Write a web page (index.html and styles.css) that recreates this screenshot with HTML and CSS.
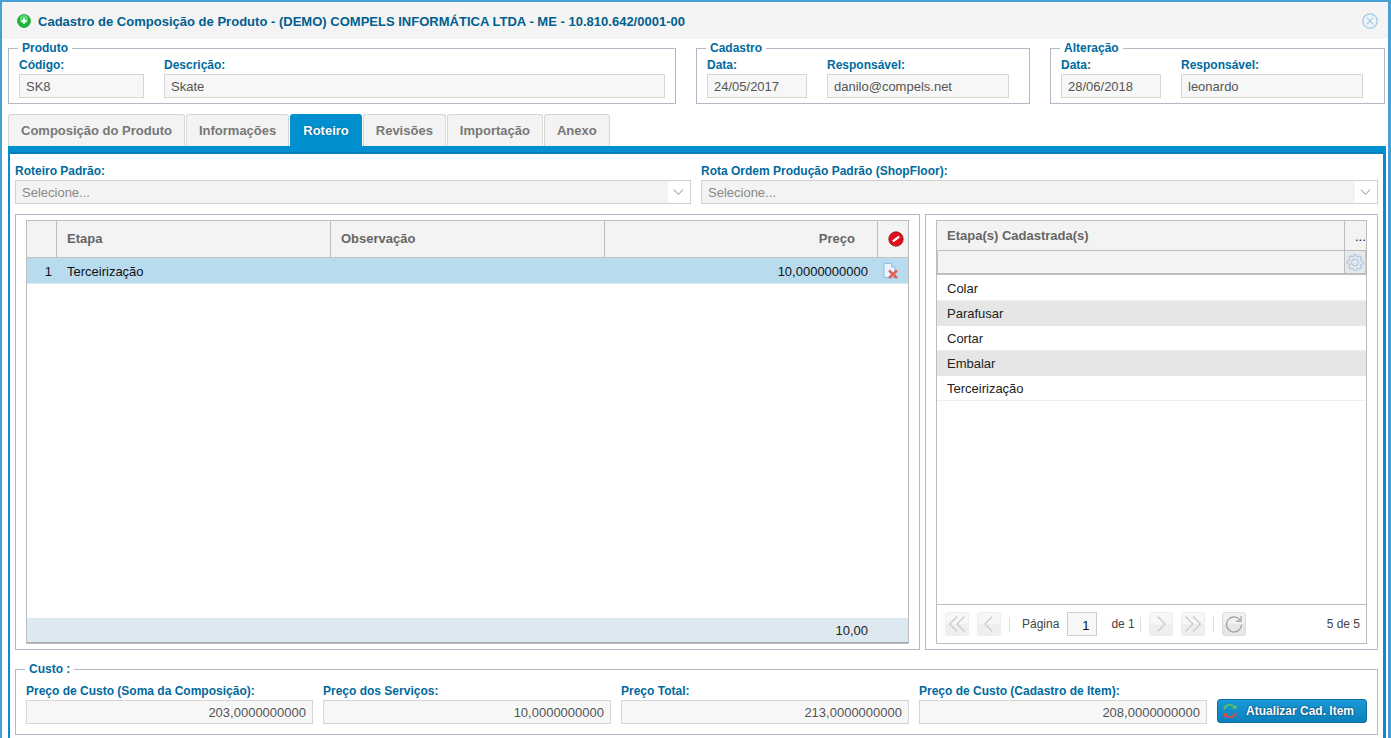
FILE: index.html
```html
<!DOCTYPE html>
<html lang="pt-BR">
<head>
<meta charset="utf-8">
<title>Cadastro de Composição de Produto</title>
<link rel="stylesheet" href="styles.css">
</head>
<body>
<div class="window">
  <header class="titlebar">
    <svg class="title-icon" viewBox="0 0 16 16"><circle cx="8" cy="8" r="7.400" fill="#1bb53a" stroke="#15963a" stroke-width=".8"/><circle cx="8" cy="6" r="4.800" fill="#8cf09c" opacity=".55"/><path d="M8 4.800v6.400M4.800 8h6.400" stroke="#fff" stroke-width="2"/></svg>
    <h1 class="title">Cadastro de Composição de Produto - (DEMO) COMPELS INFORMÁTICA LTDA - ME - 10.810.642/0001-00</h1>
    <svg class="close-icon" viewBox="0 0 16 16"><circle cx="8" cy="8" r="7.200" fill="#eef4f8" stroke="#9fcbe6" stroke-width="1.300"/><path d="M4.800 4.600l6.400 6.800M11.200 4.600l-6.400 6.800" stroke="#9fcbe6" stroke-width="1.100"/></svg>
  </header>

  <main class="content">
    <div class="top-row">
      <fieldset class="group group-produto">
        <legend>Produto</legend>
        <div class="fields">
          <div class="field w-125"><label>Código:</label><div class="input">SK8</div></div>
          <div class="field grow"><label>Descrição:</label><div class="input">Skate</div></div>
        </div>
      </fieldset>
      <fieldset class="group group-cad">
        <legend>Cadastro</legend>
        <div class="fields">
          <div class="field w-100"><label>Data:</label><div class="input">24/05/2017</div></div>
          <div class="field w-182"><label>Responsável:</label><div class="input">danilo@compels.net</div></div>
        </div>
      </fieldset>
      <fieldset class="group group-alt">
        <legend>Alteração</legend>
        <div class="fields">
          <div class="field w-100"><label>Data:</label><div class="input">28/06/2018</div></div>
          <div class="field w-182"><label>Responsável:</label><div class="input">leonardo</div></div>
        </div>
      </fieldset>
    </div>

    <nav class="tabs">
      <div class="tab">Composição do Produto</div>
      <div class="tab">Informações</div>
      <div class="tab active">Roteiro</div>
      <div class="tab">Revisões</div>
      <div class="tab">Importação</div>
      <div class="tab">Anexo</div>
    </nav>

    <section class="panel">
      <div class="selects">
        <div class="field"><label>Roteiro Padrão:</label>
          <div class="select"><span>Selecione...</span><i class="select-arrow"><svg viewBox="0 0 12 8"><path d="M1 1.500l5 5 5-5" fill="none" stroke="#a8a8a8" stroke-width="1.100"/></svg></i></div>
        </div>
        <div class="field"><label>Rota Ordem Produção Padrão (ShopFloor):</label>
          <div class="select"><span>Selecione...</span><i class="select-arrow"><svg viewBox="0 0 12 8"><path d="M1 1.500l5 5 5-5" fill="none" stroke="#a8a8a8" stroke-width="1.100"/></svg></i></div>
        </div>
      </div>

      <div class="panes">
        <div class="pane pane-left">
          <div class="grid">
            <div class="grid-head">
              <div class="th c-num"></div>
              <div class="th c-etapa">Etapa</div>
              <div class="th c-obs">Observação</div>
              <div class="th c-preco">Preço</div>
              <div class="th c-act"><svg class="ico16" viewBox="0 0 16 16"><circle cx="8" cy="8" r="7.200" fill="#e01020" stroke="#8a0a14" stroke-width=".8"/><path d="M4.800 10.400l6.400-4.800" stroke="#fff" stroke-width="2.400"/></svg></div>
            </div>
            <div class="grid-row">
              <div class="td c-num num">1</div>
              <div class="td c-etapa">Terceirização</div>
              <div class="td c-obs"></div>
              <div class="td c-preco">10,0000000000</div>
              <div class="td c-act"><svg class="ico16" viewBox="0 0 16 16"><path d="M1 .5h7.500l3.500 3.500v10.500h-11z" fill="#eaf4fc" stroke="#8dbce6"/><path d="M8.500 .5v3.500h3.500" fill="#cfe3f6" stroke="#8dbce6"/><path d="M6 7.500l8 7.500M14 7.500L6 15" stroke="#e0605e" stroke-width="2.400"/></svg></div>
            </div>
            <div class="grid-body"></div>
            <div class="grid-foot"><span>10,00</span></div>
          </div>
        </div>

        <div class="pane pane-right">
          <div class="grid grid-list">
            <div class="list-head">
              <div class="th list-title">Etapa(s) Cadastrada(s)</div>
              <div class="th list-more">...</div>
            </div>
            <div class="list-filter">
              <div class="filter-input"></div>
              <div class="filter-btn"><svg class="ico18" viewBox="0 0 24 24"><path d="M10.300 2h3.400l.5 2.800 1.900.8 2.400-1.600 2.400 2.400-1.600 2.400.8 1.900 2.800.5v3.400l-2.800.5-.8 1.900 1.600 2.400-2.400 2.400-2.400-1.600-1.900.8-.5 2.800h-3.400l-.5-2.800-1.900-.8L6 21.400 3.600 19l1.600-2.400-.8-1.900-2.800-.5v-3.400l2.800-.5.8-1.900L3.600 6 6 3.600l2.400 1.600 1.900-.8z" fill="none" stroke="#a3c6ea" stroke-width="1.400"/><circle cx="12" cy="12.600" r="4.400" fill="none" stroke="#a3c6ea" stroke-width="1.400"/></svg></div>
            </div>
            <ul class="list">
              <li>Colar</li>
              <li class="alt">Parafusar</li>
              <li>Cortar</li>
              <li class="alt">Embalar</li>
              <li>Terceirização</li>
            </ul>
            <div class="pager">
              <button class="pg-btn"><svg viewBox="0 0 24 24"><path d="M12 3L3 12l9 9M21 3l-9 9 9 9" fill="none" stroke="#c6c6c6" stroke-width="1.300"/></svg></button>
              <button class="pg-btn"><svg viewBox="0 0 24 24"><path d="M16 3l-9 9 9 9" fill="none" stroke="#c6c6c6" stroke-width="1.300"/></svg></button>
              <span class="pg-sep"></span>
              <span class="pg-text pg-label">Página</span>
              <div class="pg-input">1</div>
              <span class="pg-text pg-of">de 1</span>
              <span class="pg-sep pg-sep-tight"></span>
              <button class="pg-btn"><svg viewBox="0 0 24 24"><path d="M8 3l9 9-9 9" fill="none" stroke="#c6c6c6" stroke-width="1.300"/></svg></button>
              <button class="pg-btn"><svg viewBox="0 0 24 24"><path d="M3 3l9 9-9 9M12 3l9 9-9 9" fill="none" stroke="#c6c6c6" stroke-width="1.300"/></svg></button>
              <span class="pg-sep"></span>
              <button class="pg-btn pg-refresh"><svg viewBox="0 0 24 24"><path d="M19.500 7.500A9 9 0 1 0 21 13" fill="none" stroke="#9a9a9a" stroke-width="1.300"/><path d="M20.500 2.500v6h-6" fill="none" stroke="#9a9a9a" stroke-width="1.300"/></svg></button>
              <span class="pg-text pg-count">5 de 5</span>
            </div>
          </div>
        </div>
      </div>

      <fieldset class="group group-custo">
        <legend>Custo :</legend>
        <div class="cost-row">
          <div class="field"><label>Preço de Custo (Soma da Composição):</label><div class="input right">203,0000000000</div></div>
          <div class="field"><label>Preço dos Serviços:</label><div class="input right">10,0000000000</div></div>
          <div class="field"><label>Preço Total:</label><div class="input right">213,0000000000</div></div>
          <div class="field"><label>Preço de Custo (Cadastro de Item):</label><div class="input right">208,0000000000</div></div>
          <button class="btn-update"><svg class="ico16" viewBox="0 0 16 16"><path d="M2 6.500A6 6 0 0 1 12.500 4" fill="none" stroke="#6cc24a" stroke-width="1.700"/><path d="M10 5.500l4.500.3-.5-4z" fill="#6cc24a"/><path d="M14 9.500A6 6 0 0 1 3.500 12" fill="none" stroke="#e8483c" stroke-width="1.700"/><path d="M6 10.500l-4.500-.3.5 4z" fill="#e8483c"/></svg><span>Atualizar Cad. Item</span></button>
        </div>
      </fieldset>
    </section>
  </main>
</div>
</body>
</html>
```

FILE: styles.css
```css
* { box-sizing: border-box; }
html, body { margin: 0; height: 100%; overflow: hidden; background: #fff; }
body { font-family: "Liberation Sans", Arial, sans-serif; font-size: 13px; color: #111; }

.window {
  width: 1391px;
  height: 738px;
  overflow: hidden;
  border-top: 2px solid #45a1d5;
  border-left: 2px solid #45a1d5;
  border-right: 3px solid #45a1d5;
  background: #fff;
}
.titlebar {
  height: 37px;
  background: #f4f4f4;
  display: flex;
  align-items: center;
  padding: 1px 10px 0 15px;
}
.title-icon { width: 14px; height: 14px; flex: none; margin-right: 7px; }
.title { flex: 1; margin: 0; font-size: 13px; line-height: 37px; font-weight: bold; color: #00608f; letter-spacing: .011px; }
.close-icon { width: 16px; height: 16px; flex: none; }

.content { padding: 2px 1px 0 6px; }

.top-row { display: flex; gap: 20px; }
.group {
  margin: 0;
  padding: 0 10px;
  border: 1px solid #b2b9c7;
  min-width: 0;
}
.group legend {
  padding: 0 4px;
  margin-left: -1px;
  font-size: 12px;
  line-height: 14px;
  font-weight: bold;
  color: #006a9e;
}
.group-produto { width: 668px; height: 63px; }
.group-cad { width: 334px; height: 63px; }
.group-alt { width: 335px; height: 63px; }
.fields { display: flex; gap: 20px; margin-top: 1px; }
.field { display: flex; flex-direction: column; min-width: 0; }
.field label {
  font-size: 12px;
  line-height: 18px;
  height: 18px;
  font-weight: bold;
  color: #006a9e;
  white-space: nowrap;
}
.w-125 { width: 125px; }
.w-100 { width: 100px; }
.w-182 { width: 182px; }
.grow { flex: 0 0 501px; }
.input {
  height: 24px;
  border: 1px solid #d5d5d5;
  background: #f7f7f7;
  color: #555;
  font-size: 13px;
  line-height: 23px;
  padding: 0 6px;
}
.input.right { text-align: right; }

.tabs { display: flex; gap: 1px; margin-top: 10px; height: 32px; }
.tab {
  height: 32px;
  padding: 0 12px;
  border: 1px solid #d7d7d7;
  border-bottom: 0;
  border-radius: 3px 3px 0 0;
  background: #f3f3f3;
  color: #777;
  font-size: 13px;
  font-weight: bold;
  line-height: 31px;
}
.tab.active {
  background: #0090d0;
  border-color: #0090d0;
  color: #fff;
  text-shadow: 0 0 2px #00567d;
}

.panel {
  width: 1378px;
  height: 592px;
  border-top: 6px solid #0090d0;
  border-left: 2px solid #0090d0;
  border-right: 3px solid #0090d0;
  padding: 0 5px;
  box-shadow: inset 0 2px 0 #0580bd;
  background: #fff;
}
.selects { display: grid; grid-template-columns: 676px 677px; gap: 10px; padding-top: 12px; }
.selects .field label { height: 16px; line-height: 14px; }
.select {
  height: 24px;
  display: flex;
  border: 1px solid #d0d0d0;
  background: #f3f3f3;
  color: #888;
  line-height: 23px;
}
.select span { flex: 1; padding: 0 6px; }
.select-arrow { width: 22px; background: #fff; display: flex; align-items: center; justify-content: center; padding-right: 2px; }
.select-arrow svg { width: 11px; height: 8px; }

.panes { display: flex; gap: 5px; margin-top: 10px; height: 436px; }
.pane { border: 1px solid #b2b9c7; padding: 5px 10px; }
.pane-left { width: 905px; }
.pane-right { width: 453px; }

.grid {
  height: 424px;
  border: 1px solid #bdbdbd;
  display: flex;
  flex-direction: column;
  background: #fff;
}
.grid-head { display: flex; height: 37px; background: #f3f3f3; border-bottom: 1px solid #c4c4c4; flex: none; }
.th {
  border-right: 1px solid #bdbdbd;
  font-weight: bold;
  color: #666;
  font-size: 13px;
  line-height: 36px;
  padding: 0 10px;
}
.c-num { width: 30px; padding: 0; flex: none; }
.c-etapa { width: 274px; flex: none; padding: 0 10px; }
.c-obs { width: 274px; flex: none; padding: 0 10px; }
.c-preco { width: 273px; flex: none; text-align: right; padding: 0 22px 0 10px; }
.th.c-act { width: 31px; border-right: 0; padding: 0 0 0 4px; flex: none; display: flex; align-items: center; justify-content: center; }
.ico16 { width: 16px; height: 16px; display: block; flex: none; }
.grid-row { display: flex; height: 26px; background: #b8dbee; flex: none; border-bottom: 1px solid #d6e8f2; }
.td { line-height: 27px; color: #111; font-size: 13px; }
.td.num { text-align: right; padding-right: 5px; }
.td.c-preco { padding-right: 10px; }
.td.c-act { width: 31px; flex: none; display: flex; align-items: center; padding-left: 5px; }
.grid-body { flex: 1; }
.grid-foot {
  height: 25px;
  flex: none;
  background: #dce9f1;
  border-bottom: 1px solid #a8a8a8;
  text-align: right;
  padding-right: 40px;
  line-height: 26px;
  color: #222;
}

.list-head { display: flex; height: 30px; background: #f3f3f3; border-bottom: 1px solid #bdbdbd; flex: none; }
.list-title { flex: 1; line-height: 29px; }
.list-more { width: 21px; flex: none; border-right: 0; padding: 0 0 0 10px; color: #111; font-weight: normal; overflow: hidden; line-height: 32px; }
.list-filter { display: flex; height: 24px; flex: none; border-bottom: 2px solid #bdbdbd; }
.filter-input { flex: 1; background: #f3f3f3; border-left: 1px solid #a8cbe6; border-right: 1px solid #bdbdbd; }
.filter-btn { width: 21px; flex: none; background: #e8e8e8; border-right: 1px solid #a8cbe6; display: flex; align-items: center; justify-content: center; }
.ico18 { width: 18px; height: 18px; display: block; }
.list { flex: 1; list-style: none; margin: 0; padding: 1px 0 0; }
.list li { height: 25px; line-height: 25px; padding: 0 10px; color: #222; border-bottom: 1px solid #eee; }
.list li.alt { background: #e6e6e6; border-bottom-color: #e6e6e6; }

.pager {
  height: 39px;
  flex: none;
  border-top: 1px solid #bdbdbd;
  display: flex;
  align-items: center;
  padding: 0 6px 0 8px;
  font-size: 12px;
  color: #444;
}
.pg-btn {
  width: 24px;
  height: 24px;
  padding: 1px;
  margin: 0 8px 0 0;
  border: 1px solid #eee;
  border-radius: 3px;
  background: linear-gradient(#f7f7f7 50%, #efefef 50%);
  flex: none;
}
.pg-btn svg { display: block; width: 100%; height: 100%; }
.pg-refresh { background: linear-gradient(#f0f0f0 50%, #e6e6e6 50%); border-color: #ddd; margin: 0; }
.pg-sep { width: 1px; height: 15px; background: #ddd; margin: 0 8px 0 0; flex: none; }
.pg-sep-tight { margin: 0 8px 0 5px; }
.pg-text { white-space: nowrap; }
.pg-label { margin: 0 8px 0 4px; }
.pg-input {
  width: 30px;
  height: 24px;
  border: 1px solid #ccc;
  background: #f7f7f7;
  text-align: right;
  padding-right: 7px;
  line-height: 25px;
  font-size: 13px;
  color: #111;
  margin-right: 14px;
  flex: none;
}
.pg-count { margin-left: auto; }

.group-custo { margin-top: 12px; height: 73px; padding: 0 10px; }
.cost-row { display: grid; grid-template-columns: 287px 288px 288px 288px 150px; gap: 10px; margin-top: 8px; }
.cost-row label { height: 16px; line-height: 14px; }
.btn-update {
  height: 24px;
  margin-top: 15px;
  padding: 0 4px;
  display: flex;
  align-items: center;
  gap: 8px;
  border: 1px solid #0a6ea3;
  border-radius: 3px;
  background: linear-gradient(#1a9ad6, #0a80bb);
  color: #fff;
  font: bold 12px "Liberation Sans", Arial, sans-serif;
  text-shadow: 0 0 2px #024;
  white-space: nowrap;
}
```
